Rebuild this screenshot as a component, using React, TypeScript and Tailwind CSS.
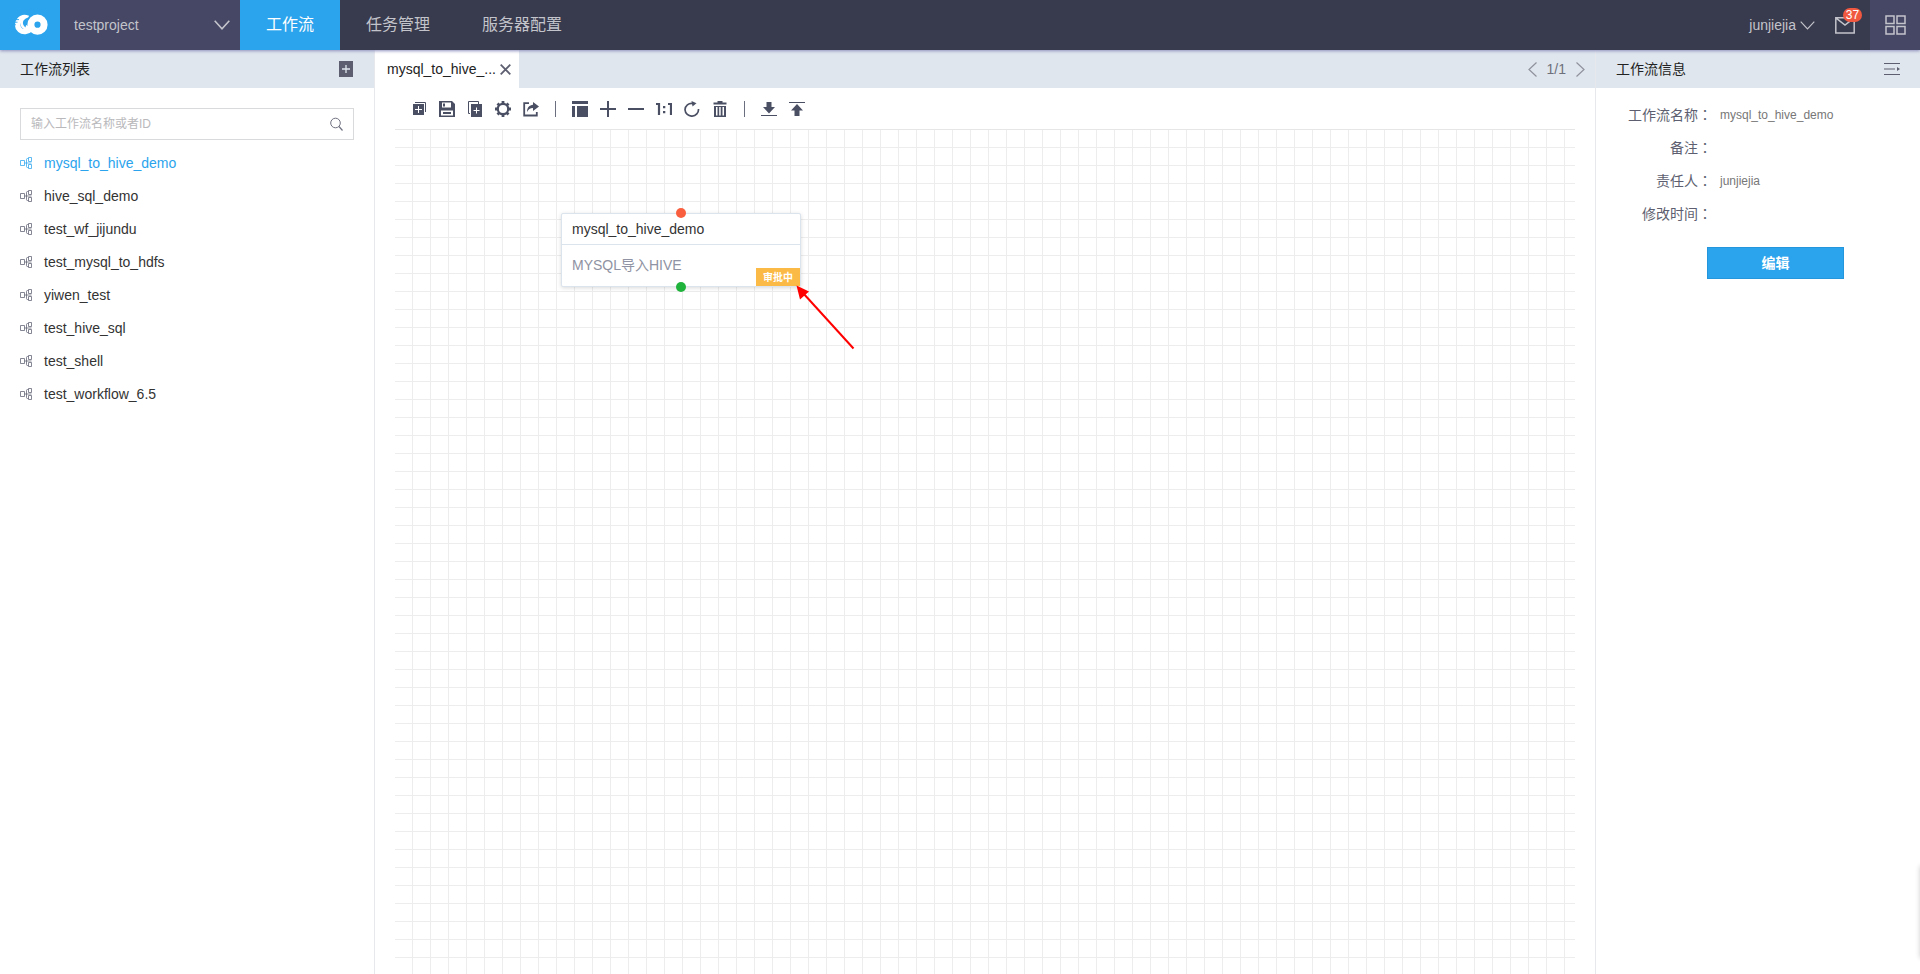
import type { ReactNode } from 'react';

const workflows = [
  'mysql_to_hive_demo',
  'hive_sql_demo',
  'test_wf_jijundu',
  'test_mysql_to_hdfs',
  'yiwen_test',
  'test_hive_sql',
  'test_shell',
  'test_workflow_6.5',
];

const info = [
  { label: '工作流名称', value: 'mysql_to_hive_demo' },
  { label: '备注', value: '' },
  { label: '责任人', value: 'junjiejia' },
  { label: '修改时间', value: '' },
];

function Logo() {
  return (
    <svg width="36" height="22" viewBox="0 0 36 22" aria-hidden="true">
      <path
        d="M16 4.200C13 3 9.500 3.600 7.500 6C4.800 9 5 13.500 8 16C11 18.500 15.500 18 18.500 15"
        fill="none"
        stroke="#fff"
        strokeWidth="5.500"
      />
      <path d="M8.500 7C7.500 12 10.500 16.500 17 16V12C13 12 11.500 8 15 5.500z" fill="#fff" />
      <circle cx="25.500" cy="10.700" r="6.600" fill="none" stroke="#fff" strokeWidth="7" />
      <path d="M17 3.200C10.500 5 9 9.500 13.500 13.500C14.500 10.500 14.200 6.500 17.800 3.800z" fill="#2ba4ed" />
      <path d="M2 5.600h5M0.500 8.200h5M0.500 10.800h3.500" stroke="#2ba4ed" strokeWidth="0.900" />
    </svg>
  );
}

function Chevron({ width, height, stroke }: { width: number; height: number; stroke: number }) {
  return (
    <svg width={width} height={height} viewBox={`0 0 ${width} ${height}`} fill="none" stroke="currentColor" strokeWidth={stroke} aria-hidden="true">
      <path d={`M0.700 0.700L${width / 2} ${height - 1.2}L${width - 0.7} 0.700`} />
    </svg>
  );
}

function FlowIcon() {
  return (
    <svg width="12" height="12" viewBox="0 0 12 12" fill="none" stroke="currentColor" aria-hidden="true">
      <path
        d="M0.500 3.500h4v5h-4zM8.500 0.500h3v4h-3zM8.500 7.500h3v4h-3zM8.500 1.500h-1q-1 0-1 1v7q0 1 1 1h1M4.500 6h7"
        opacity="0.750"
      />
    </svg>
  );
}

function Icon({ children }: { children: ReactNode }) {
  return (
    <svg width="16" height="16" viewBox="0 0 16 16" fill="currentColor" aria-hidden="true">
      {children}
    </svg>
  );
}

const line = { fill: 'none', stroke: 'currentColor' };

const tools: { label: string; icon: ReactNode }[][] = [
  [
    {
      label: '新建',
      icon: (
        <>
          <path d="M2 3h11v11H2z" />
          <path d="M4 1.500h10.500V11" {...line} />
          <path d="M7.500 5v7M4 8.500h7" stroke="#fff" />
        </>
      ),
    },
    {
      label: '保存',
      icon: (
        <path fillRule="evenodd" d="M0 0h13l3 3v13H0zM3 1.500v5h9v-5zM4 2.500h2v3H4zM2 9.500v5h12v-5zM4 11h8v2H4z" />
      ),
    },
    {
      label: '复制',
      icon: (
        <>
          <path d="M3 12.500H1.500V.5h10V3" {...line} />
          <path d="M4 3h11v13H4z" />
          <path d="M9.500 6.500v6M6.500 9.500h6" stroke="#fff" />
        </>
      ),
    },
    {
      label: '设置',
      icon: (
        <>
          <circle cx="8" cy="8" r="5.200" {...line} strokeWidth="2.200" />
          <path
            d="M8 0v3M8 13v3M0 8h3M13 8h3M2.500 2.500l2 2M11.500 11.500l2 2M2.500 13.500l2-2M11.500 4.500l2-2"
            {...line}
            strokeWidth="2.800"
          />
        </>
      ),
    },
    {
      label: '分享',
      icon: (
        <>
          <path d="M6 2.200H1.200v12.300h12.600V11" {...line} strokeWidth="1.800" />
          <path d="M10 1l6 4.500-6 4.500V7C7 7 5.500 8.300 4 11c0-4.500 2.500-7 6-7.300z" />
        </>
      ),
    },
  ],
  [
    { label: '布局', icon: <path d="M0 0h16v3H0zM0 5h3v11H0zM5 5h11v11H5z" /> },
    { label: '放大', icon: <path d="M7 0h2v7h7v2H9v7H7V9H0V7h7z" /> },
    { label: '缩小', icon: <path d="M0 7h16v2H0z" /> },
    {
      label: '原始大小',
      icon: (
        <>
          <path d="M0 3h3V14M12 3h3V14" {...line} strokeWidth="2.200" />
          <path d="M7 5h2.300v2.300H7zM7 10h2.300v2.300H7z" />
        </>
      ),
    },
    {
      label: '刷新',
      icon: (
        <>
          <path d="M9.500 2.600C4.500 1.500 1 5 1 8.800a6.700 6.700 0 0 0 13.500-.8" {...line} strokeWidth="1.700" />
          <path d="M7.500 0l5 2.300-4 3.300z" />
        </>
      ),
    },
    {
      label: '删除',
      icon: (
        <>
          <path d="M5.500 0h5v1.500h4v2h-13v-2h4z" />
          <path fillRule="evenodd" d="M2 5h12v11H2zM4 6v8.500h1.500V6zM7.200 6v8.500h1.500V6zM10.500 6v8.500H12V6z" />
        </>
      ),
    },
  ],
  [
    { label: '下载', icon: <path d="M5.500 1h5v5H14l-6 6.500L2 6h3.500zM0 14h16v1H0z" /> },
    { label: '上传', icon: <path d="M0 1h16v1H0zM8 3l6 6.500h-3.500V15h-5V9.500H2z" /> },
  ],
];

function Header() {
  return (
    <header className="relative z-10 flex h-[50px] shrink-0 bg-[#383a4d] text-[#c3c4cb] shadow-[0_1px_3px_0_#8f90bd]">
      <a href="#home" aria-label="首页" className="flex w-[60px] items-center justify-center bg-[#2ba4ed]">
        <Logo />
      </a>
      <button className="flex w-[180px] items-center justify-between bg-[#454764] pr-[10px] pl-[14px] text-sm">
        testproject
        <Chevron width={16} height={10} stroke={1.6} />
      </button>
      <nav className="flex text-base">
        <a href="#workflow" className="flex items-center bg-[#2ba4ed] px-[26px] text-white">工作流</a>
        <a href="#tasks" className="flex items-center px-[26px]">任务管理</a>
        <a href="#servers" className="flex items-center px-[26px]">服务器配置</a>
      </nav>
      <div className="ml-auto flex">
        <button className="flex items-center gap-1 text-sm">
          junjiejia
          <Chevron width={15} height={9} stroke={1.2} />
        </button>
        <button aria-label="消息" className="relative mr-[15px] ml-5 flex w-5 items-center">
          <svg width="20" height="17" viewBox="0 0 20 17" fill="none" stroke="currentColor" strokeWidth="1.500" aria-hidden="true">
            <path d="M0.800 0.800h18.400v15.200H0.800zM0.800 0.800L10 8L19.200 0.800" />
          </svg>
          <span className="absolute top-2 left-2 flex h-[14px] w-[19px] items-center justify-center rounded-full bg-[#f0583f] text-xs text-white">37</span>
        </button>
        <button aria-label="应用" className="flex w-[50px] items-center justify-center bg-[#454764]">
          <svg width="21" height="20" viewBox="0 0 21 20" fill="none" stroke="currentColor" strokeWidth="1.500" aria-hidden="true">
            <path d="M1 1h8v7.500H1zM12 1h8v7.500h-8zM1 11.500h8V19H1zM12 11.500h8V19h-8z" />
          </svg>
        </button>
      </div>
    </header>
  );
}

function Sidebar() {
  return (
    <aside className="flex w-[375px] shrink-0 flex-col border-r border-[#e6e8ec]">
      <div className="flex h-[38px] items-center justify-between bg-[#dfe6ed] pr-[21px] pl-5">
        <h2 className="text-sm">工作流列表</h2>
        <button aria-label="新建工作流">
          <svg width="14" height="16" viewBox="0 0 14 16" aria-hidden="true">
            <path d="M0 0h14v16H0z" fill="#5d5f70" />
            <path d="M7 4v8M3 8h8" stroke="#dfe6ed" strokeWidth="1.300" />
          </svg>
        </button>
      </div>
      <div className="mx-5 mt-5 flex h-8 items-center border border-[#d9dadc] px-[10px]">
        <input
          type="text"
          aria-label="搜索工作流"
          placeholder="输入工作流名称或者ID"
          className="min-w-0 flex-1 text-xs outline-none placeholder:text-[#b9b9bc]"
        />
        <svg width="13" height="14" viewBox="0 0 13 14" fill="none" stroke="#6f7180" aria-hidden="true">
          <circle cx="5.500" cy="6" r="4.800" />
          <path d="M9 9.500l3.500 4" strokeWidth="1.200" />
        </svg>
      </div>
      <ul className="mt-[6px]">
        {workflows.map((name, i) => (
          <li key={name}>
            <a href={`#${name}`} className={i === 0 ? 'flex h-[33px] items-center gap-3 px-5 text-sm text-[#2ba4ed]' : 'flex h-[33px] items-center gap-3 px-5 text-sm text-[#333]'}>
              <span className={i === 0 ? 'text-[#2ba4ed]' : 'text-[#5d5f70]'}>
                <FlowIcon />
              </span>
              {name}
            </a>
          </li>
        ))}
      </ul>
    </aside>
  );
}

function Canvas() {
  return (
    <div className="relative mr-5 ml-5 flex-1 overflow-hidden border-t border-[#e6e6e6] bg-[linear-gradient(to_left,#ededed_1px,transparent_1px),linear-gradient(to_top,#ededed_1px,transparent_1px)] bg-[size:18px_18px]">
      <div className="absolute top-[83px] left-[166px] h-[74px] w-[240px] rounded-xs border border-[#dbe3ec] bg-white shadow-[0_1px_4px_rgba(0,0,0,0.15)]">
        <div className="flex h-[31px] items-center border-b border-[#dbe3ec] px-[10px] text-sm text-[#333]">mysql_to_hive_demo</div>
        <div className="flex h-10 items-center px-[10px] text-sm text-[#8f93a3]">MYSQL导入HIVE</div>
        <span className="absolute -top-[6px] left-[114px] size-[10px] rounded-full bg-[#f95f3e]" />
        <span className="absolute -bottom-[6px] left-[114px] size-[10px] rounded-full bg-[#20b33c]" />
        <span className="absolute right-0 bottom-0 flex h-[18px] w-11 items-center justify-center bg-[#fbb945] text-[10px] font-bold text-white">审批中</span>
      </div>
      <svg className="absolute top-[155px] left-[400px]" width="62" height="66" viewBox="0 0 62 66" aria-hidden="true">
        <path d="M8 8L58.500 63.500" stroke="#f00" strokeWidth="2" />
        <path d="M1.500 0.500L14 6.500L5 14.500z" fill="#f00" />
      </svg>
    </div>
  );
}

function Workspace() {
  return (
    <main className="flex min-w-0 flex-1 flex-col">
      <div className="flex h-[38px] shrink-0 items-center justify-between bg-[#dfe6ed] pr-[10px]">
        <div className="flex h-full w-36 items-center justify-between bg-white pr-2 pl-3 text-sm">
          mysql_to_hive_...
          <button aria-label="关闭">
            <svg width="11" height="11" viewBox="0 0 11 11" stroke="#5d5f70" strokeWidth="1.800" aria-hidden="true">
              <path d="M0.700 0.700l9.600 9.600M10.300 0.700L0.700 10.300" />
            </svg>
          </button>
        </div>
        <div className="flex items-center gap-[10px] text-sm text-[#6d6f7b]">
          <button aria-label="上一页">
            <svg width="9" height="15" viewBox="0 0 9 15" fill="none" stroke="#8f919c" strokeWidth="1.200" aria-hidden="true">
              <path d="M8.500 0.500L1 7.500L8.500 14.500" />
            </svg>
          </button>
          1/1
          <button aria-label="下一页">
            <svg width="9" height="15" viewBox="0 0 9 15" fill="none" stroke="#8f919c" strokeWidth="1.200" aria-hidden="true">
              <path d="M0.500 0.500L8 7.500L0.500 14.500" />
            </svg>
          </button>
        </div>
      </div>
      <div className="flex h-[41px] shrink-0 items-center gap-3 px-9 text-[#4b4f63]">
        {tools.map((group, g) => (
          <div key={g} className="flex items-center gap-3">
            {g > 0 && <span className="mx-1 h-4 w-px bg-[#6b6e7e]" />}
            {group.map((tool) => (
              <button key={tool.label} aria-label={tool.label}>
                <Icon>{tool.icon}</Icon>
              </button>
            ))}
          </div>
        ))}
      </div>
      <Canvas />
    </main>
  );
}

function InfoPanel() {
  return (
    <aside className="flex w-[325px] shrink-0 flex-col border-l border-[#e6e8ec]">
      <div className="flex h-[38px] items-center justify-between bg-[#dfe6ed] pr-5 pl-5">
        <h2 className="text-sm">工作流信息</h2>
        <button aria-label="收起">
          <svg width="16" height="12" viewBox="0 0 16 12" stroke="#5d5f70" aria-hidden="true">
            <path d="M0 0.500h16M0 6h11M0 11.500h16" />
            <path d="M13 4l3 2-3 2z" fill="#5d5f70" stroke="none" />
          </svg>
        </button>
      </div>
      <dl className="mt-[10px]">
        {info.map((row) => (
          <div key={row.label} className="flex h-[33px] items-center">
            <dt className="w-[116px] text-right text-sm text-[#5d5f70]">
              {row.label}
              <span className="font-['Noto_Sans_CJK_TC',sans-serif]">：</span>
            </dt>
            <dd className="ml-2 text-xs text-[#777]">{row.value}</dd>
          </div>
        ))}
      </dl>
      <button className="mt-[17px] ml-[111px] h-8 w-[137px] border border-[#2496dc] bg-[#2ba4ed] text-sm font-bold text-white">编辑</button>
    </aside>
  );
}

export default function App() {
  return (
    <div className="relative flex min-h-screen flex-col overflow-hidden bg-white font-['Liberation_Sans','Noto_Sans_CJK_SC',sans-serif] text-[#222]">
      <Header />
      <div className="flex flex-1">
        <Sidebar />
        <Workspace />
        <InfoPanel />
      </div>
      <div className="absolute -right-10 bottom-4 h-[92px] w-10 shadow-[0_0_5px_rgba(0,0,0,0.2)]" />
    </div>
  );
}
